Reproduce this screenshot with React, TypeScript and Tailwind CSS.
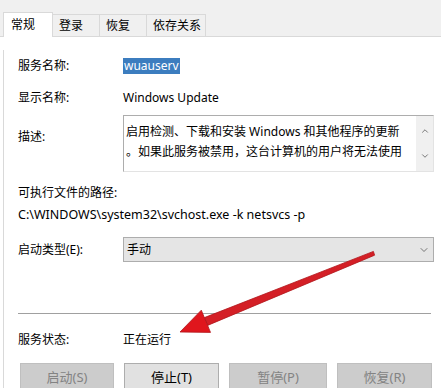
import { ChevronDown, ChevronUp } from "lucide-react";

const font = { fontFamily: '"Noto Sans", "Noto Sans CJK SC", sans-serif' };

const tabs = [
  { label: "常规", w: "w-[50px]" },
  { label: "登录", w: "w-[47px]" },
  { label: "恢复", w: "w-[47px]" },
  { label: "依存关系", w: "w-[59px]" },
];

const buttons = [
  { label: "启动(S)", enabled: false, w: "w-[94px]" },
  { label: "停止(T)", enabled: true, w: "w-[95px]" },
  { label: "暂停(P)", enabled: false, w: "w-[98px]" },
  { label: "恢复(R)", enabled: false, w: "w-[95px]" },
];

export default function App() {
  return (
    <div
      className="relative w-[441px] h-[388px] overflow-hidden bg-white text-[12px] leading-[18px] text-black"
      style={font}
    >
      {/* tab strip */}
      <div className="flex h-[37px] items-end bg-[#f0f0f0] border-b border-[#d9d9d9] pl-[3px]">
        {tabs.map((t, i) =>
          i === 0 ? (
            <div
              key={t.label}
              className={`relative -mb-px flex h-[25px] ${t.w} items-center pl-[7px] bg-white border border-b-0 border-[#d9d9d9]`}
            >
              {t.label}
            </div>
          ) : (
            <div
              key={t.label}
              className={`flex h-[22px] ${t.w} items-center pl-[6px] border-t border-r border-[#d9d9d9] bg-[#f0f0f0]`}
            >
              {t.label}
            </div>
          )
        )}
      </div>

      {/* general page */}
      <div className="h-[351px] ml-[3px] border-l border-[#d9d9d9] pl-[14px] pr-[7px]">
        <div className="flex h-[32px] mt-[13px] items-center">
          <div className="w-[105px]">服务名称:</div>
          <span className="bg-[#3c7dbf] text-white px-px leading-[16px]">wuauserv</span>
        </div>

        <div className="flex h-[32px] items-center">
          <div className="w-[105px]">显示名称:</div>
          <span>Windows Update</span>
        </div>

        <div className="flex h-[57px] mt-px">
          <div className="w-[105px] pt-[13px]">描述:</div>
          <div className="flex flex-1 border border-[#adadad] border-r-[#e3e3e3] border-b-[#e3e3e3]">
            <div className="flex-1 pl-[2px] pt-[6px] leading-[20px]">
              <div>启用检测、下载和安装 Windows 和其他程序的更新</div>
              <div>。如果此服务被禁用，这台计算机的用户将无法使用</div>
            </div>
            <div className="flex w-[17px] flex-col items-center justify-between bg-[#f0f0f0] py-[10px] text-[#606060]">
              <ChevronUp size={10} strokeWidth={2} />
              <ChevronDown size={10} strokeWidth={2} />
            </div>
          </div>
        </div>

        <div className="mt-[12px]">可执行文件的路径:</div>
        <div className="mt-[4px] text-[12.5px]">C:\WINDOWS\system32\svchost.exe -k netsvcs -p</div>

        <div className="flex mt-[13px] items-center">
          <div className="w-[105px]">启动类型(E):</div>
          <div className="flex h-[25px] flex-1 items-center justify-between bg-[#e5e5e5] border border-[#adadad] pl-[3px] pr-[3px]">
            <span>手动</span>
            <ChevronDown size={12} strokeWidth={1.5} className="text-[#505050]" />
          </div>
        </div>

        <div className="mt-[51px] h-px mr-[3px] bg-[#a0a0a0]" />

        <div className="flex mt-[17px] items-center">
          <div className="w-[105px]">服务状态:</div>
          <span>正在运行</span>
        </div>

        <div className="mt-[14px] flex gap-[10px] pl-[2px]">
          {buttons.map((b) => (
            <div
              key={b.label}
              className={
                b.enabled
                  ? `flex h-[27px] ${b.w} items-center justify-center bg-[#e1e1e1] border border-[#adadad] text-[13px]`
                  : `flex h-[27px] ${b.w} items-center justify-center bg-[#cccccc] border border-[#bfbfbf] text-[#838383] text-[13px]`
              }
            >
              {b.label}
            </div>
          ))}
        </div>
      </div>

      {/* red annotation arrow */}
      <svg className="absolute left-0 top-0 pointer-events-none" width="441" height="388">
        <polygon
          points="373.4,251.4 374.6,255.2 207.6,325.4 204.4,317.6"
          fill="#d41f26"
          stroke="#b0151b"
          strokeWidth="0.8"
        />
        <polygon points="180,332 201.3,310.2 210.5,332.4" fill="#e0161d" stroke="#b0151b" strokeWidth="0.8" />
      </svg>
    </div>
  );
}
